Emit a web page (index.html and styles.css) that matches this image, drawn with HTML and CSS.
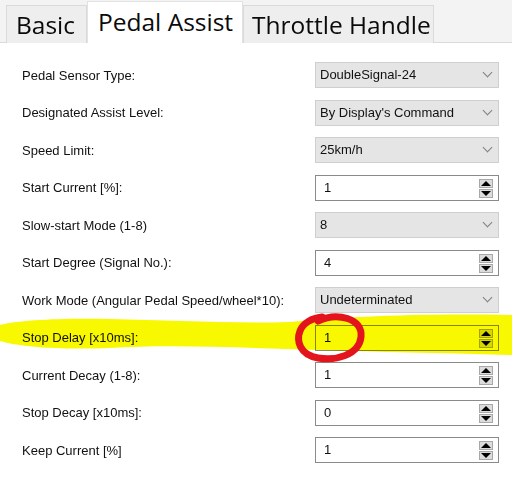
FILE: index.html
```html
<!DOCTYPE html>
<html lang="en">

<head>
    <meta charset="UTF-8">
    <meta name="viewport" content="width=device-width, initial-scale=1.0">
    <title>Pedal Assist</title>
    <link rel="stylesheet" href="styles.css">
</head>

<body>
    <nav class="tabs">
        <div class="tab">Basic</div>
        <div class="tab activa">Pedal Assist</div>
        <div class="tab">Throttle Handle</div>
    </nav>

    <section class="ajustes">
        <label>Pedal Sensor Type:</label>
        <div class="combo">DoubleSignal-24<span class="flecha"></span></div>

        <label>Designated Assist Level:</label>
        <div class="combo">By Display's Command<span class="flecha"></span></div>

        <label>Speed Limit:</label>
        <div class="combo">25km/h<span class="flecha"></span></div>

        <label>Start Current [%]:</label>
        <div class="spin">1<span class="botones"><span class="arriba"></span><span class="abajo"></span></span></div>

        <label>Slow-start Mode (1-8)</label>
        <div class="combo">8<span class="flecha"></span></div>

        <label>Start Degree (Signal No.):</label>
        <div class="spin">4<span class="botones"><span class="arriba"></span><span class="abajo"></span></span></div>

        <label>Work Mode (Angular Pedal Speed/wheel*10):</label>
        <div class="combo">Undeterminated<span class="flecha"></span></div>

        <label>Stop Delay [x10ms]:</label>
        <div class="spin">1<span class="botones"><span class="arriba"></span><span class="abajo"></span></span></div>

        <label>Current Decay (1-8):</label>
        <div class="spin">1<span class="botones"><span class="arriba"></span><span class="abajo"></span></span></div>

        <label>Stop Decay [x10ms]:</label>
        <div class="spin">0<span class="botones"><span class="arriba"></span><span class="abajo"></span></span></div>

        <label>Keep Current [%]</label>
        <div class="spin">1<span class="botones"><span class="arriba"></span><span class="abajo"></span></span></div>
    </section>

    <!-- marcas hechas a mano encima de la captura -->
    <svg class="marcas" width="512" height="489" viewBox="0 0 512 489">
        <path class="amarillo" d="M0 325 C20 320 60 318 110 319 C170 320 230 324 290 322 C340 317 420 313 512 315 L512 355 C440 353 380 352 320 350 C250 348 170 344 110 348 C60 350 20 347 0 341 Z" />
        <path class="rojo" d="M318 321 C337 312 363 318 361 337 C359 355 336 361 318 358 C300 355 296 341 300 331 C303 323 312 318 322 317" />
    </svg>
</body>

</html>
```

FILE: styles.css
```css
body {
    margin: 0;
    background-color: #fff;
    font-family: "Liberation Sans", Arial, sans-serif;
    font-size: 13px;
    color: #111;
}

.tabs {
    display: flex;
    align-items: flex-end;
    box-sizing: border-box;
    height: 43px;
    padding-left: 6px;
    background-color: #f3f3f3;
    border-bottom: 1px solid #dadada;
}

.tab {
    box-sizing: border-box;
    height: 38px;
    margin-bottom: -1px;
    padding: 2px 0 0 9px;
    font-family: "Open Sans", sans-serif;
    font-size: 24.5px;
    font-weight: 500;
    line-height: 34px;
    color: #0a0a0a;
    background-color: #eeeeee;
    border: 1px solid #dadada;
    border-bottom: none;
}

.tab:nth-child(1) {
    width: 81px;
}

.tab:nth-child(3) {
    width: 191px;
    padding-left: 8px;
}

.tab.activa {
    width: 156px;
    height: 42px;
    padding: 3px 0 0 10px;
    background-color: #fff;
    border-color: #e2e2e2;
    position: relative;
    z-index: 1;
}

.ajustes {
    display: grid;
    grid-template-columns: 293px 184px;
    grid-auto-rows: 26px;
    row-gap: 11.5px;
    align-items: center;
    padding: 19px 0 0 22px;
}

.combo,
.spin {
    box-sizing: border-box;
    height: 26px;
    display: flex;
    align-items: center;
    position: relative;
    line-height: 24px;
}

.combo {
    padding-left: 4px;
    background-color: #e5e5e5;
    border: 1px solid #cfcfcf;
}

.spin {
    padding-left: 8px;
    background-color: #fff;
    border: 1px solid #8a8a8a;
}

.flecha {
    position: absolute;
    right: 7px;
    top: 6px;
    width: 6px;
    height: 6px;
    border-right: 1px solid #808080;
    border-bottom: 1px solid #808080;
    transform: rotate(45deg);
}

.botones {
    position: absolute;
    right: 5px;
    top: 3px;
    display: flex;
    flex-direction: column;
    gap: 1px;
}

.arriba,
.abajo {
    box-sizing: border-box;
    width: 14px;
    height: 9px;
    background-color: #dcdcdc;
    border: 1px solid #a8a8a8;
    display: flex;
    justify-content: center;
    align-items: center;
}

.arriba::after,
.abajo::after {
    content: "";
    width: 0;
    height: 0;
    border-left: 5px solid transparent;
    border-right: 5px solid transparent;
}

.arriba::after {
    border-bottom: 5px solid #000;
}

.abajo::after {
    border-top: 5px solid #000;
}

.marcas {
    position: absolute;
    top: 0;
    left: 0;
    pointer-events: none;
}

.amarillo {
    fill: #f8f800;
    mix-blend-mode: multiply;
}

.rojo {
    fill: none;
    stroke: #e3141c;
    stroke-width: 7;
    stroke-linecap: round;
}
```
